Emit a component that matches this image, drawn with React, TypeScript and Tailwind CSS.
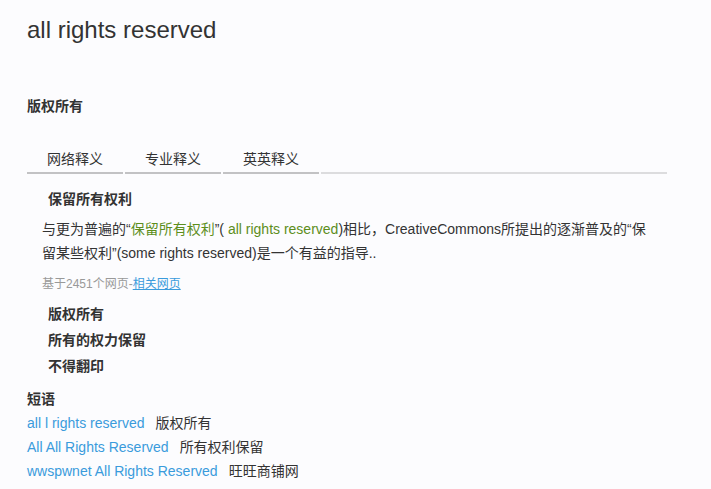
import React from 'react';

const font = { fontFamily: '"Liberation Sans", Arial, "Noto Sans CJK SC", sans-serif' };

const App = () => {
  const tabs = ['网络释义', '专业释义', '英英释义'];

  const meanings = ['版权所有', '所有的权力保留', '不得翻印'];

  const phrases = [
    { en: 'all l rights reserved', zh: '版权所有' },
    { en: 'All All Rights Reserved', zh: '所有权利保留' },
    { en: 'wwspwnet All Rights Reserved', zh: '旺旺商铺网' },
  ];

  return (
    <div className="min-h-[489px] w-[711px] overflow-hidden bg-[#fcfcfe] px-[27px] text-[#333]" style={font}>
      {/* Headword */}
      <h1 className="pt-[14px] text-[24px] leading-[32px] text-[#333]">all rights reserved</h1>

      {/* Basic meaning */}
      <div className="mt-[50px] text-[14px] font-bold leading-[20px]">版权所有</div>

      {/* Tabs */}
      <div className="mt-[33px] flex w-[640px] gap-[2px]">
        {tabs.map((tab) => (
          <div
            key={tab}
            className="w-[96px] border-b-2 border-[#c2c2c4] pb-[3px] text-center text-[14px] leading-[20px]"
          >
            {tab}
          </div>
        ))}
        <div className="flex-1 border-b-2 border-[#dcdcde]" />
      </div>

      {/* Web definition */}
      <div className="mt-[15px] pl-[21px] text-[14px] font-bold leading-[20px]">保留所有权利</div>
      <p className="mt-[8px] w-[627px] pl-[15px] text-[14px] leading-[24px]">
        与更为普遍的“<span className="text-[#5d8e1c]">保留所有权利</span>”(
        <span className="text-[#5d8e1c]"> all rights reserved</span>)相比，CreativeCommons所提出的逐渐普及的“保留某些权利”(some rights reserved)是一个有益的指导..
      </p>
      <div className="mt-[10px] pl-[15px] text-[12px] leading-[18px] text-[#999]">
        基于2451个网页-<span className="text-[#3a9bdc] underline">相关网页</span>
      </div>

      {/* Other meanings */}
      <div className="mt-[11px] flex flex-col gap-[6px] pl-[21px]">
        {meanings.map((m) => (
          <div key={m} className="text-[14px] font-bold leading-[20px]">
            {m}
          </div>
        ))}
      </div>

      {/* Phrases */}
      <div className="mt-[13px] text-[14px] font-bold leading-[20px]">短语</div>
      <div className="mt-[4px] flex flex-col gap-[4px]">
        {phrases.map((p) => (
          <div key={p.en} className="text-[14px] leading-[20px]">
            <span className="text-[#3a9bdc]">{p.en}</span>
            <span className="ml-[11px]">{p.zh}</span>
          </div>
        ))}
      </div>
    </div>
  );
};

export default App;
